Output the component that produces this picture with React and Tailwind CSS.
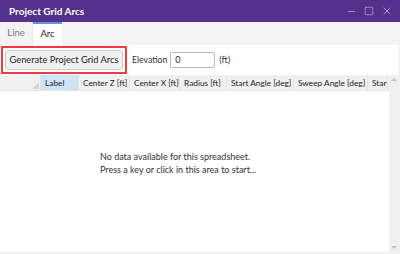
import { Minus, Square, X } from "lucide-react";

const columns = [
  { label: "Label", w: "w-[38px]", active: true },
  { label: "Center Z [ft]", w: "w-[51px]" },
  { label: "Center X [ft]", w: "w-[50px]" },
  { label: "Radius [ft]", w: "w-[47px]" },
  { label: "Start Angle [deg]", w: "w-[67px]" },
  { label: "Sweep Angle [deg]", w: "w-[74px]" },
  { label: "Start", w: "w-[20px]" },
];

export default function App() {
  return (
    <div
      className="w-[400px] h-[254px] bg-[#f0f0f0] flex flex-col overflow-hidden text-[#1f1f1f]"
      style={{ fontFamily: 'Lato, "Open Sans", sans-serif' }}
    >
      {/* Title bar */}
      <div className="h-[22px] bg-[#55308d] flex items-center pl-[9px] pr-[7px] shrink-0">
        <span className="text-white text-[10px] font-bold">Project Grid Arcs</span>
        <div className="ml-auto flex items-center gap-[7px] text-[#c9bedd]">
          <Minus className="w-[11px] h-[11px]" strokeWidth={1.5} />
          <Square className="w-[10px] h-[10px]" strokeWidth={1.5} />
          <X className="w-[12px] h-[12px]" strokeWidth={1.5} />
        </div>
      </div>

      {/* Tabs */}
      <div className="h-[23px] bg-[#f3f3f3] flex items-stretch shrink-0">
        <div className="w-[33px] flex items-center justify-center text-[9.5px] text-[#7a7a7a] border-r border-[#e6e6e6]">
          Line
        </div>
        <div className="w-[29px] flex items-center justify-center text-[9.5px] text-[#1f1f1f] bg-white border-t-2 border-[#5b9bd5]">
          Arc
        </div>
      </div>

      {/* Body */}
      <div className="flex-1 bg-white mr-[1px] mb-[2px] flex flex-col min-h-0">
        <div className="flex items-center h-[29px] pl-[1px] shrink-0">
          <div className="border-2 border-[#ee3a43] p-[2px] w-[126px] h-[28px] flex shrink-0">
            <button className="flex-1 bg-[#f0f0f0] border border-[#cfcfcf] rounded-[2px] text-[9.3px] text-[#1f1f1f] whitespace-nowrap">
              Generate Project Grid Arcs
            </button>
          </div>
          <span className="ml-[5px] text-[8.7px] text-[#333]">Elevation</span>
          <div className="ml-[3px] w-[45px] h-[16px] border border-[#b9b9b9] rounded-[2px] flex items-center px-[4px] text-[9px]">
            0
          </div>
          <span className="ml-[4px] text-[9px] text-[#333]">(ft)</span>
        </div>

        {/* Grid */}
        <div className="flex-1 flex min-h-0 mt-[1px]">
          <div className="flex-1 flex flex-col min-w-0">
            <div className="h-[16px] flex bg-[#f0f0f0] border-b border-[#e4e4e4] shrink-0">
              <div className="w-[41px] relative border-r border-[#e4e4e4]">
                <div className="absolute right-[1px] bottom-[1px] w-0 h-0 border-l-[7px] border-l-transparent border-b-[7px] border-b-[#d6d6d6]" />
              </div>
              {columns.map((c) => (
                <div
                  key={c.label}
                  className={`${c.w} shrink-0 overflow-hidden whitespace-nowrap border-r border-[#e4e4e4] text-[8.3px] leading-[16px] pl-[4px] text-[#222] ${
                    c.active ? "bg-[#cde4f7]" : ""
                  }`}
                >
                  {c.label}
                </div>
              ))}
            </div>
            <div className="flex-1 flex flex-col pl-[100px] pt-[60px] text-[9px] leading-[12.5px] text-[#333]">
              <span>No data available for this spreadsheet.</span>
              <span>Press a key or click in this area to start...</span>
            </div>
          </div>
          <div className="w-[10px] bg-[#f0f0f0] flex flex-col items-center justify-between py-[3px]">
            <div className="w-0 h-0 border-l-[3px] border-r-[3px] border-b-[3px] border-l-transparent border-r-transparent border-b-[#c2c2c2]" />
            <div className="w-0 h-0 border-l-[3px] border-r-[3px] border-t-[3px] border-l-transparent border-r-transparent border-t-[#c2c2c2]" />
          </div>
        </div>
      </div>
    </div>
  );
}
